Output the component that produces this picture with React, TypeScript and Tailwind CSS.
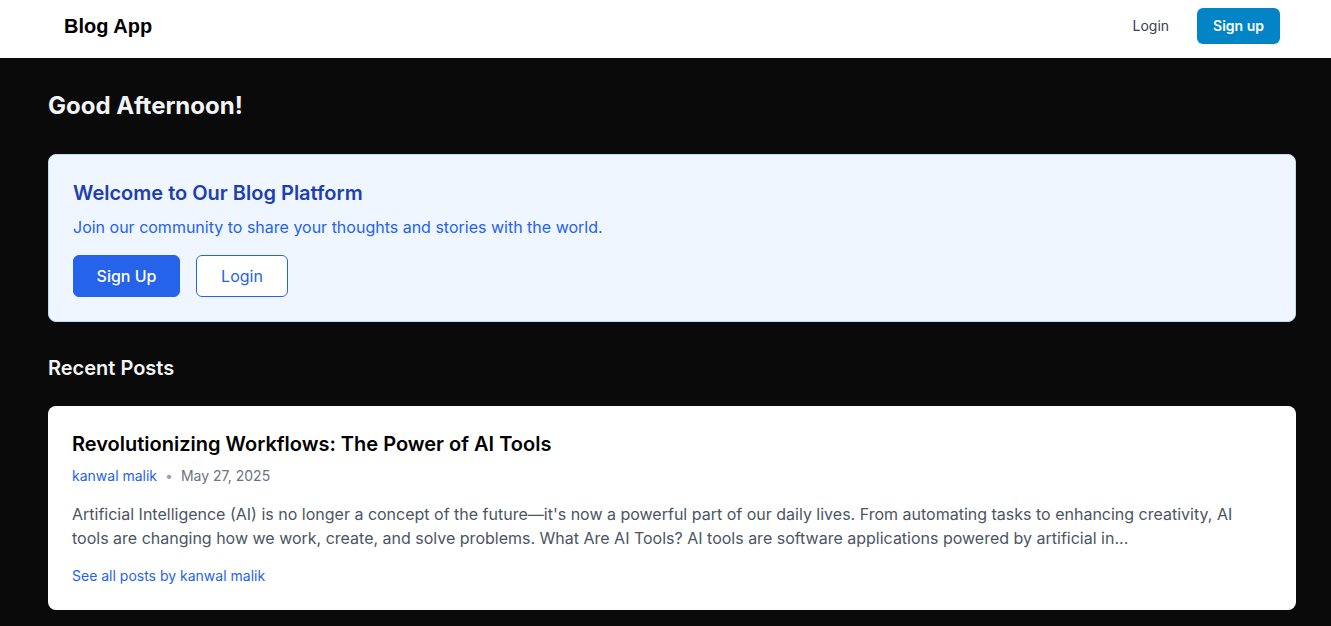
export default function App() {
  return (
    <main className="min-h-screen bg-[#0a0a0a] font-['Inter',sans-serif]">
      {/* HEADER */}
      <header className="h-[58px] bg-white pl-16 pr-[51px] pt-2 pb-[14px] flex items-center justify-between">
        <h1 className="text-xl font-bold text-black font-['Liberation_Sans',Arial,sans-serif]">
          Blog App
        </h1>
        <nav className="flex items-center gap-3">
          <button className="px-4 py-2 text-sm text-[#374151]">Login</button>
          <button className="px-4 py-2 text-sm font-semibold text-white bg-[#0284c7] rounded-md">
            Sign up
          </button>
        </nav>
      </header>

      <section className="px-12 pt-8 pb-4">
        <div className="w-[1248px]">
          <h2 className="text-2xl font-bold text-gray-100 mb-8">Good Afternoon!</h2>

          {/* WELCOME */}
          <div className="bg-[#eff6ff] border border-[#bfdbfe] rounded-lg p-6 mb-8">
            <h3 className="text-xl font-semibold text-[#1e40af] mb-2">
              Welcome to Our Blog Platform
            </h3>
            <p className="text-[#2563eb] mb-4">
              Join our community to share your thoughts and stories with the world.
            </p>
            <div className="flex gap-4">
              <button className="w-[107px] py-2 border border-[#2563eb] bg-[#2563eb] text-white font-medium rounded-md">
                Sign Up
              </button>
              <button className="w-[92px] py-2 border border-[#2563eb] bg-white text-[#2563eb] rounded-md">
                Login
              </button>
            </div>
          </div>

          {/* RECENT POSTS */}
          <h2 className="text-xl font-semibold text-gray-100 mb-6">Recent Posts</h2>

          <div className="bg-white rounded-lg p-6">
            <h3 className="text-xl font-semibold text-black mb-2">
              Revolutionizing Workflows: The Power of AI Tools
            </h3>
            <div className="flex items-center text-sm mb-4">
              <span className="text-[#2563eb]">kanwal malik</span>
              <span className="mx-2 text-[#9ca3af]">•</span>
              <span className="text-[#6b7280]">May 27, 2025</span>
            </div>
            <p className="text-[#4b5563] mb-4">
              Artificial Intelligence (AI) is no longer a concept of the future—it's now a powerful part of our daily lives. From automating tasks to enhancing creativity, AI tools are changing how we work, create, and solve problems. What Are AI Tools? AI tools are software applications powered by artificial in...
            </p>
            <a className="block text-sm text-[#2563eb]">See all posts by kanwal malik</a>
          </div>
        </div>
      </section>
    </main>
  );
}
